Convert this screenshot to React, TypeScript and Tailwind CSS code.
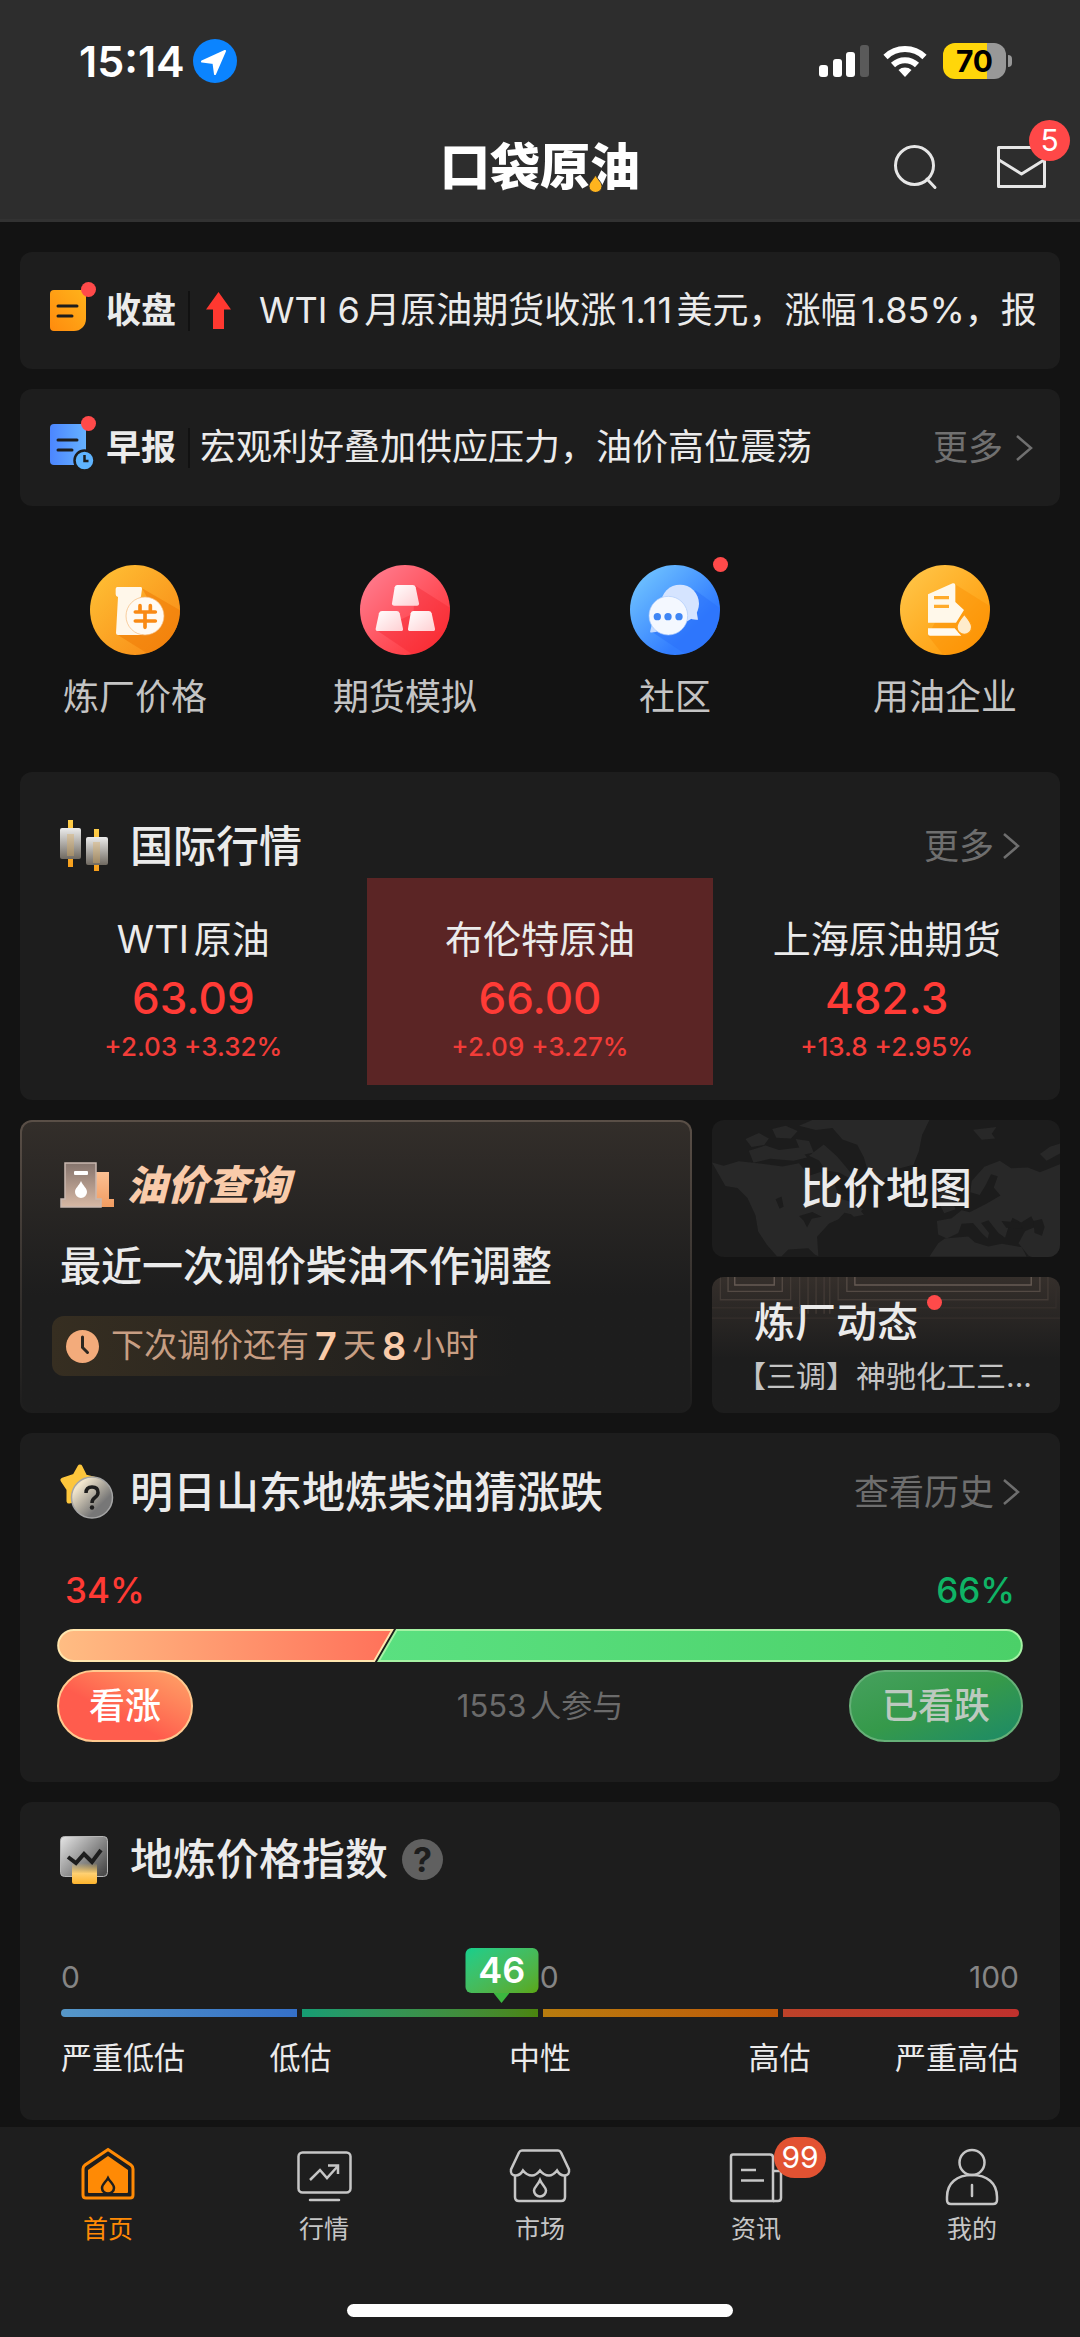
import type { ReactNode } from "react";

const quickLinks = [
  { label: "炼厂价格", icon: <RefineryPriceIcon />, dot: false },
  { label: "期货模拟", icon: <FuturesIcon />, dot: false },
  { label: "社区", icon: <CommunityIcon />, dot: true },
  { label: "用油企业", icon: <CompanyIcon />, dot: false },
];

const quotes = [
  { name: "WTI原油", price: "63.09", change: "+2.03 +3.32%", active: false },
  { name: "布伦特原油", price: "66.00", change: "+2.09 +3.27%", active: true },
  { name: "上海原油期货", price: "482.3", change: "+13.8 +2.95%", active: false },
];

const tabs = [
  { label: "首页", icon: <HomeIcon />, active: true, badge: "" },
  { label: "行情", icon: <ChartIcon />, active: false, badge: "" },
  { label: "市场", icon: <MarketIcon />, active: false, badge: "" },
  { label: "资讯", icon: <NewsIcon />, active: false, badge: "99" },
  { label: "我的", icon: <UserIcon />, active: false, badge: "" },
];

export default function App() {
  return (
    <div className="min-h-screen bg-[#131313] font-['Inter','Noto_Sans_CJK_SC',sans-serif] text-[#ebebeb] [text-autospace:normal]">
      <header className="border-b-[3px] border-[#323232] bg-[#2d2d2d]">
        <StatusBar />
        <div className="grid h-[97px] grid-cols-[1fr_auto_1fr] items-center px-[34px] pb-2">
          <div />
          <Logo />
          <div className="flex items-center justify-end gap-[58px]">
            <button type="button" aria-label="搜索">
              <svg width="46" height="46" viewBox="0 0 46 46" fill="none" stroke="#e6e6e6" strokeWidth="3">
                <circle cx="21.5" cy="21.5" r="19" />
                <path d="M34 35l8 8.500" strokeLinecap="round" />
              </svg>
            </button>
            <button type="button" aria-label="消息" className="relative">
              <svg width="49" height="46" viewBox="0 0 49 46" fill="none" stroke="#e6e6e6" strokeWidth="3" strokeLinejoin="round">
                <rect x="1.500" y="3.500" width="46" height="39" />
                <path d="M2 16l22.500 14L47 16" />
              </svg>
              <span className="absolute -top-6 -right-6 flex size-[41px] items-center justify-center rounded-full bg-[#ff4848] text-[30px] text-white">
                5
              </span>
            </button>
          </div>
        </div>
      </header>

      <main className="flex flex-col gap-5 px-5 pt-[30px] pb-[7px]">
        {/* News rows */}
        <NewsRow label="收盘" icon={<CloseNoteIcon />}>
          <svg width="25" height="37" viewBox="0 0 25 37" className="ml-4 shrink-0" fill="#ff3830">
            <path d="M12.500 0L25 17.500H18V37H7V17.500H0z" />
          </svg>
          <p className="ml-7 flex-1 overflow-hidden whitespace-nowrap">
            WTI 6月原油期货收涨1.11美元，涨幅1.85%，报
          </p>
        </NewsRow>
        <NewsRow label="早报" icon={<MorningNoteIcon />}>
          <p className="ml-2.5 flex-1 overflow-hidden whitespace-nowrap">
            宏观利好叠加供应压力，油价高位震荡
          </p>
          <a href="#" className="flex items-center gap-3 pr-[7px] text-[35px] text-[#707070]">
            更多
            <Chevron />
          </a>
        </NewsRow>

        {/* Quick links */}
        <nav className="-mx-5 grid grid-cols-4 pt-[39px] pb-[29px]">
          {quickLinks.map((item) => (
            <a href="#" key={item.label} className="flex flex-col items-center gap-4">
              <span className="relative">
                {item.icon}
                {item.dot && <Dot className="-top-2 -right-2" />}
              </span>
              <span className="text-[36px] leading-[52px] text-[#c4c4c4]">{item.label}</span>
            </a>
          ))}
        </nav>

        {/* Quotes */}
        <section className="rounded-xl bg-[#1d1d1d] pt-[42px] pb-[15px]">
          <SectionHeader icon={<CandleIcon />} title="国际行情" more="更多" />
          <div className="grid grid-cols-3">
            {quotes.map((q) => (
              <a
                href="#"
                key={q.name}
                className={`flex flex-col items-center pt-9 pb-[23px] ${q.active ? "bg-[#5b2525]" : ""}`}
              >
                <span className="text-[38px] leading-[50px]">{q.name}</span>
                <span className="text-[44px] leading-[68px] font-medium text-[#ff3b36]">{q.price}</span>
                <span className="text-[26px] leading-[30px] font-medium text-[#f23c38]">{q.change}</span>
              </a>
            ))}
          </div>
        </section>

        {/* Oil price / map / refinery */}
        <section className="grid grid-cols-[672fr_348fr] gap-5">
          <OilPriceCard />
          <div className="grid grid-rows-2 gap-5">
            <a href="#" className="relative flex items-center justify-center overflow-hidden rounded-xl bg-[#1c1c1c]">
              <WorldMap />
              <span className="relative text-[43px] leading-none font-medium">比价地图</span>
            </a>
            <a
              href="#"
              className="relative overflow-hidden rounded-xl bg-linear-to-b from-[#352f2b] to-[#1d1d1d] to-60% pt-[18px] pl-6"
            >
              <WallPattern />
              <span className="relative ml-[18px] inline-block text-[41px] leading-[54px] font-medium">
                炼厂动态
                <Dot className="top-0 -right-6" />
              </span>
              <span className="relative block truncate text-[30px] leading-[54px] text-[#c4c4c4]">
                【三调】神驰化工三...
              </span>
            </a>
          </div>
        </section>

        <VoteCard />
        <IndexCard />
      </main>

      <footer className="bg-[#1e1e1e] pt-5 pb-5">
        <nav className="grid grid-cols-5">
          {tabs.map((tab) => (
            <a
              href="#"
              key={tab.label}
              className={`flex flex-col items-center ${tab.active ? "text-[#ff8a05]" : "text-[#c6c6c6]"}`}
            >
              <span className="relative">
                {tab.icon}
                {tab.badge && (
                  <span className="absolute -top-2.5 left-[48px] flex h-[41px] w-[52px] items-center justify-center rounded-full bg-[#e25232] text-[30px] text-white">
                    {tab.badge}
                  </span>
                )}
              </span>
              <span className="text-[25px] leading-[44px]">{tab.label}</span>
            </a>
          ))}
        </nav>
        <div className="mx-auto mt-[53px] h-[13px] w-[386px] rounded-full bg-white" />
      </footer>
    </div>
  );
}

function StatusBar() {
  return (
    <div className="flex h-[122px] items-center justify-between pr-[68px] pl-[79px] text-white">
      <div className="flex items-center gap-2">
        <span className="text-[43px] leading-none font-semibold">15:14</span>
        <svg width="44" height="44" viewBox="0 0 44 44">
          <circle cx="22" cy="22" r="22" fill="#0b84ff" />
          <path d="M32 12L9 22.500l11.500 1.500L22 35z" fill="#fff" stroke="#fff" strokeWidth="2" strokeLinejoin="round" />
        </svg>
      </div>
      <div className="flex items-center">
        <svg width="50" height="33" viewBox="0 0 50 33" fill="#fff">
          <rect x="0" y="20" width="9" height="12" rx="3" />
          <rect x="14" y="14" width="9" height="18" rx="3" />
          <rect x="27" y="7" width="9" height="25" rx="3" />
          <rect x="41" y="0" width="9" height="32" rx="3" fill="#5a5a5a" />
        </svg>
        <svg width="44" height="33" viewBox="0 0 44 33" className="ml-3.5" fill="none" stroke="#fff">
          <path d="M2.500 12a28 28 0 0 1 39 0" strokeWidth="6" />
          <path d="M10 20a17.500 17.500 0 0 1 24 0" strokeWidth="6" />
          <path d="M22 32l-6.500-7a10 10 0 0 1 13 0z" fill="#fff" stroke="none" />
        </svg>
        <span className="ml-4 flex h-9 w-[63px] items-center justify-center rounded-xl bg-linear-to-r from-[#ffd60a] from-70% to-[#989898] to-70% text-[30px] leading-none font-bold text-black">
          70
        </span>
        <span className="ml-0.5 h-3 w-1 rounded-r-full bg-[#989898]" />
      </div>
    </div>
  );
}

function Logo() {
  return (
    <h1 className="relative text-[50px] leading-none font-black text-white">
      口袋原油
      <svg width="13" height="17" viewBox="0 0 13 17" className="absolute right-[38px] bottom-0">
        <path d="M6.500 0C9 5 13 7.500 13 11.500A6 5.500 0 0 1 0 11.500C0 7.500 4 5 6.500 0z" fill="#ffb41e" stroke="#2d2d2d" />
      </svg>
    </h1>
  );
}

function Dot({ className }: { className: string }) {
  return <span className={`absolute size-[15px] rounded-full bg-[#ff4a4a] ${className}`} />;
}

function Chevron() {
  return (
    <svg width="18" height="28" viewBox="0 0 18 28" fill="none" stroke="currentColor" strokeWidth="2.500">
      <path d="M2 2l14 12L2 26" />
    </svg>
  );
}

function NewsRow({ label, icon, children }: { label: string; icon: ReactNode; children: ReactNode }) {
  return (
    <section className="flex items-center rounded-xl bg-[#1d1d1d] px-5 py-8 text-[36px] leading-[53px]">
      <span className="relative ml-2.5 shrink-0">
        {icon}
        <Dot className="-top-2 left-[31px]" />
      </span>
      <h2 className="ml-5 text-[35px] font-bold whitespace-nowrap">{label}</h2>
      <span className="ml-3 h-10 w-0.5 shrink-0 bg-[#111]" />
      {children}
    </section>
  );
}

function SectionHeader({ icon, title, more, hint }: { icon: ReactNode; title: string; more?: string; hint?: boolean }) {
  return (
    <div className="flex h-16 items-center px-10">
      <span className="flex w-[70px] shrink-0">{icon}</span>
      <h2 className="text-[43px] leading-none font-medium">{title}</h2>
      {hint && (
        <button
          type="button"
          aria-label="说明"
          className="ml-3.5 flex size-[41px] items-center justify-center rounded-full bg-[#606060] text-[34px] leading-none font-bold text-[#1d1d1d]"
        >
          ?
        </button>
      )}
      {more && (
        <a href="#" className="ml-auto flex items-center gap-2 text-[35px] leading-none text-[#6e6e6e]">
          {more}
          <Chevron />
        </a>
      )}
    </div>
  );
}

function OilPriceCard() {
  return (
    <a href="#" className="block rounded-xl bg-linear-to-b from-[#5a4f47] to-[#1d1d1d] p-0.5">
      <div className="h-full rounded-[10px] bg-linear-to-b from-[#332e2a] to-[#1d1d1d] to-60% pt-8 pb-[35px] pl-[38px]">
        <div className="flex h-[62px] items-center gap-3">
          <PumpIcon />
          <h2 className="text-[41px] leading-none font-black text-[#f9cbaa] italic">油价查询</h2>
        </div>
        <p className="mt-5 text-[41px] leading-[60px] font-medium whitespace-nowrap">最近一次调价柴油不作调整</p>
        <p className="mt-5 -ml-2 flex h-[60px] w-[464px] items-center rounded-xl bg-linear-to-r from-[#362e21] to-[#1d1d1d] pl-3.5 text-[33px] whitespace-nowrap text-[#c79e83]">
          <svg width="33" height="33" viewBox="0 0 33 33" className="mr-3 shrink-0">
            <circle cx="16.500" cy="16.500" r="16.500" fill="#f3ab7b" />
            <path d="M16.500 7v10.500l5 5" fill="none" stroke="#2c2620" strokeWidth="3" strokeLinecap="round" />
          </svg>
          下次调价还有
          <strong className="mx-1.5 text-[38px] font-semibold text-[#f9cbaa]">7</strong>天
          <strong className="mx-1.5 text-[38px] font-semibold text-[#f9cbaa]">8</strong>小时
        </p>
      </div>
    </a>
  );
}

function VoteCard() {
  return (
    <section className="rounded-xl bg-[#1d1d1d] pt-[27px] pb-10">
      <SectionHeader icon={<GuessIcon />} title="明日山东地炼柴油猜涨跌" more="查看历史" />
      <div className="px-[37px]">
        <div className="mt-11 flex justify-between px-2 text-[35px] leading-[44px] font-medium">
          <span className="text-[#ff3a34]">34%</span>
          <span className="text-[#0fb466]">66%</span>
        </div>
        <svg viewBox="0 0 967 33" className="mt-[17px] w-full">
          <defs>
            <linearGradient id="up">
              <stop stopColor="#ffbd83" />
              <stop offset="1" stopColor="#ff715a" />
            </linearGradient>
            <linearGradient id="down">
              <stop stopColor="#5ae080" />
              <stop offset="1" stopColor="#4bd068" />
            </linearGradient>
          </defs>
          <path d="M16.500 1H335.500L317.500 32H16.500a15.500 15.500 0 0 1 0-31z" fill="url(#up)" stroke="#ffe6ae" strokeWidth="2" />
          <path d="M340 1H950.500a15.500 15.500 0 0 1 0 31H322z" fill="url(#down)" stroke="#a5f3a4" strokeWidth="2" />
        </svg>
        <div className="mt-2 grid grid-cols-3 items-center text-[36px] font-medium">
          <button type="button" className="h-[72px] w-[136px] rounded-full border-2 border-[#ffc98f] bg-linear-to-bl from-[#ffa368] to-[#ff5c4d] to-60% text-white">
            看涨
          </button>
          <span className="text-center text-[31px] font-normal text-[#6b6b6b]">1553人参与</span>
          <button type="button" className="h-[72px] w-[174px] justify-self-end rounded-full border-2 border-[#66b078] bg-linear-to-br from-[#46a15e] via-[#35994a] to-[#1b8a66] text-[#bcc9bf]">
            已看跌
          </button>
        </div>
      </div>
    </section>
  );
}

function IndexCard() {
  return (
    <section className="rounded-xl bg-[#1d1d1d] pt-[26px] pb-10">
      <SectionHeader icon={<IndexIcon />} title="地炼价格指数" hint />
      <div className="px-[41px]">
        <div className="relative mt-[65px] grid grid-cols-3 text-[30px] leading-10 text-[#858585]">
          <span>0</span>
          <span className="text-center">50</span>
          <span className="text-right">100</span>
          <span
            className="absolute -top-[9px] flex h-[45px] w-[73px] -translate-x-1/2 items-center justify-center rounded-md bg-linear-to-br from-[#10cf8c] to-[#5aa70e] text-[36px] font-semibold text-white"
            style={{ left: "46%" }}
          >
            46
            <svg width="16" height="10" viewBox="0 0 16 10" className="absolute top-full" fill="#3cb83f">
              <path d="M0 0h16L8 10z" />
            </svg>
          </span>
        </div>
        <div className="mt-3 grid h-2 grid-cols-4 gap-[5px] overflow-hidden rounded-full">
          <div className="bg-linear-to-r from-[#5697c8] to-[#3570c8]" />
          <div className="bg-linear-to-r from-[#159d73] to-[#4b850c]" />
          <div className="bg-linear-to-r from-[#b87c0e] to-[#bf5809]" />
          <div className="bg-linear-to-r from-[#bd4229] to-[#c0312d]" />
        </div>
        <div className="mt-[19px] grid grid-cols-8 text-[31px] leading-[44px] whitespace-nowrap">
          <span>严重低估</span>
          <span className="col-span-2 text-center">低估</span>
          <span className="col-span-2 text-center">中性</span>
          <span className="col-span-2 text-center">高估</span>
          <span className="flex justify-end">严重高估</span>
        </div>
      </div>
    </section>
  );
}

function WorldMap() {
  return (
    <svg viewBox="40 33 1040 408" preserveAspectRatio="xMidYMid slice" className="absolute inset-0 size-full" fill="#282828">
      <path d="M40 160l35 10 45-14 70 8 60 8 50-10 30 38 36-12 14 42 26-6 16 44 34 10 36 22-22 18-34-8-18 20-28 12-36 40 4 58-10-4-20-20-60 4-20 20h-14l-30-34-26-40-8-48-24-52-30-30-36-6z" />
      <path d="M300 50l40-17h350l-22 44-10 50-16 40-46 12-34 22-24 30-28-30-16-56-20-38-44-16-30-34-50 6z" />
      <path d="M140 90l40-18 30 16-14 20-38 6zM220 60l40-10 36 16-20 22-44-2zM150 125l50-16 40 14 60-8 24 30-40 10-70-6-50 12zM290 90l40 6 14 34-34 8zM330 140l44-34 40 36 42 50 0 18-36-20-40-6-20-30zM820 62l70-8-14 20 10 14-40 4zM1020 135l30-22 30-10v30l-40 22z" />
      <path d="M1080 165l-60 24-36-14-50 2-34-22-46 18-38 42-4 34 28 8 18-30 16-32 20 6-12 34 20 24-42 24-50 26-24-6-30 24-44 8 4 40 26 12 34-16 10-28 34-2 30 34 14 12 4-16-24-30 22-8 30 38 20 14 8-26 14-34 26 14 30-18 16 30-34 14-20 36 30 38 40 14h56z" />
      <path d="M690 441l26-40 20-14 70-6 20 18 40 12 40-8 60 10 14 28zM716 258l22-18 16 26 14 34-34 12-10-20zM440 300l30-14 24 30-30 6z" />
      <path fill="#1c1c1c" d="M1000 335l26-6 8 24-8 26-22-8zM905 335l50 4 14 18-50-2zM300 320l40-12 28 14-30 6-14 26-10-20zM230 270l18-8 6 30-12 6z" />
    </svg>
  );
}

function WallPattern() {
  return (
    <svg viewBox="40 501 1040 408" preserveAspectRatio="xMidYMin slice" className="absolute inset-0 size-full" fill="none" strokeWidth="4">
      <g stroke="#675b54">
        <path d="M108 501v24h118v-24M467 501v24h527v-24" />
      </g>
      <g stroke="#544a44">
        <path d="M88 501v43h162v-43M443 501v43h577v-43" />
      </g>
      <g stroke="#433b36">
        <path d="M65 501v68h210v-68M417 501v68h627v-68M302 501v110M327 501v110M351 501v110M375 501v110M392 501v110" />
      </g>
      <g stroke="#342e2b">
        <path d="M40 593h262M392 593h676v-92M40 624h1040" />
      </g>
    </svg>
  );
}

function CloseNoteIcon() {
  return (
    <svg width="36" height="42" viewBox="0 0 36 42">
      <defs>
        <linearGradient id="note-close" x1="0" y1="1" x2="1" y2="0">
          <stop stopColor="#ff8b0d" />
          <stop offset="1" stopColor="#ffb31b" />
        </linearGradient>
      </defs>
      <path d="M4 0h32v29a12 12 0 0 1-12 12H4a4 4 0 0 1-4-4V4a4 4 0 0 1 4-4z" fill="url(#note-close)" />
      <path d="M8 16h19M8 26h14" stroke="#1d1d1d" strokeWidth="3" strokeLinecap="round" />
    </svg>
  );
}

function MorningNoteIcon() {
  return (
    <svg width="36" height="47" viewBox="0 0 36 47" className="overflow-visible">
      <defs>
        <linearGradient id="note-morning">
          <stop stopColor="#4c86ff" />
          <stop offset="1" stopColor="#66b2ff" />
        </linearGradient>
      </defs>
      <rect width="36" height="41" rx="4" fill="url(#note-morning)" />
      <path d="M8 16h19M8 26h14" stroke="#1d1d1d" strokeWidth="3" strokeLinecap="round" />
      <circle cx="34.500" cy="36.500" r="10" fill="#5fb4ff" stroke="#1d1d1d" strokeWidth="2.500" />
      <path d="M34.500 31v6h4" fill="none" stroke="#1d1d1d" strokeWidth="2.500" />
    </svg>
  );
}

function RefineryPriceIcon() {
  return (
    <svg width="90" height="90" viewBox="0 0 270 270">
      <defs>
        <linearGradient id="refinery" x1="0" y1="0" x2="1" y2="1">
          <stop stopColor="#ffc337" />
          <stop offset="1" stopColor="#f88612" />
        </linearGradient>
        <clipPath id="refinery-clip">
          <circle cx="135" cy="135" r="135" />
        </clipPath>
      </defs>
      <circle cx="135" cy="135" r="135" fill="url(#refinery)" />
      <path d="M156 70l114 66v134H180L80 208l120-60z" fill="#ef7a05" opacity="0.550" clipPath="url(#refinery-clip)" />
      <path d="M82 66h70q5 0 4 6l-3 22q0 5-6 6l8 110H84q-6 0-6-6l6-108q-7-2-7-8V72q0-6 5-6z" fill="#fff7ea" />
      <circle cx="165" cy="153" r="57" fill="#fffaf2" stroke="#f5b774" strokeWidth="2" />
      <path d="M150 122v16M181 122v16M136 141h60M136 168h60M165 141v46" stroke="#f98a14" strokeWidth="11" fill="none" strokeLinecap="round" />
    </svg>
  );
}

function FuturesIcon() {
  return (
    <svg width="90" height="90" viewBox="0 0 270 270">
      <defs>
        <linearGradient id="futures" x1="0" y1="0" x2="1" y2="1">
          <stop offset="0.100" stopColor="#ff7a8c" />
          <stop offset="0.900" stopColor="#ff3338" />
        </linearGradient>
        <linearGradient id="ingot" x1="0" y1="0" x2="1" y2="1">
          <stop stopColor="#fff" />
          <stop offset="1" stopColor="#ffcfd2" />
        </linearGradient>
        <clipPath id="futures-clip">
          <circle cx="135" cy="135" r="135" />
        </clipPath>
      </defs>
      <circle cx="135" cy="135" r="135" fill="url(#futures)" />
      <path d="M166 62l104 66v142H160L50 196l110-50z" fill="#f0202c" opacity="0.350" clipPath="url(#futures-clip)" />
      <g fill="url(#ingot)">
        <path d="M112 60h46q7 0 9 7l10 48q1 7-6 7h-68q-8 0-7-7l8-48q2-7 8-7z" />
        <path d="M66 138h44q7 0 9 7l10 46q1 7-6 7H54q-8 0-7-7l10-46q2-7 9-7z" />
        <path d="M160 138h46q7 0 9 7l10 46q1 7-6 7h-68q-8 0-7-7l8-46q2-7 8-7z" />
      </g>
    </svg>
  );
}

function CommunityIcon() {
  return (
    <svg width="90" height="90" viewBox="0 0 270 270">
      <defs>
        <linearGradient id="community" x1="0" y1="0" x2="1" y2="1">
          <stop offset="0.100" stopColor="#6fc2ff" />
          <stop offset="0.700" stopColor="#327dff" />
        </linearGradient>
        <clipPath id="community-clip">
          <circle cx="135" cy="135" r="135" />
        </clipPath>
      </defs>
      <circle cx="135" cy="135" r="135" fill="url(#community)" />
      <path d="M196 76l74 54v140H170L62 198z" fill="#2a70fa" opacity="0.500" clipPath="url(#community-clip)" />
      <circle cx="150" cy="116" r="57" fill="#d5e4ff" />
      <path d="M200 140l4 24q-14 2-28-6z" fill="#d5e4ff" />
      <path d="M66 176l-6 26q14 2 34-8z" fill="#c4dbff" />
      <circle cx="115" cy="152" r="58" fill="#f4f8ff" stroke="#a9c8fb" strokeWidth="2" />
      <g fill="#3f86f5">
        <circle cx="82" cy="155" r="11" />
        <circle cx="114" cy="155" r="11" />
        <circle cx="147" cy="155" r="11" />
      </g>
    </svg>
  );
}

function CompanyIcon() {
  return (
    <svg width="90" height="90" viewBox="0 0 270 270">
      <defs>
        <linearGradient id="company" x1="0" y1="0" x2="1" y2="1">
          <stop stopColor="#ffc94d" />
          <stop offset="1" stopColor="#ff9400" />
        </linearGradient>
        <clipPath id="company-clip">
          <circle cx="135" cy="135" r="135" />
        </clipPath>
      </defs>
      <circle cx="135" cy="135" r="135" fill="url(#company)" />
      <path d="M165 58l105 66v146H130L84 212z" fill="#fb8c00" opacity="0.400" clipPath="url(#company-clip)" />
      <path d="M84 88l74-33q8-2 8 6v50l26 24-24 38H84z" fill="#fff8ea" />
      <path d="M102 98h45M102 124h45" stroke="#ffab2b" strokeWidth="10" />
      <path d="M84 190h80l20 22H90q-6 0-6-6z" fill="#fffaf0" />
      <path d="M193 148q22 26 22 38a22 22 0 0 1-44 0q0-12 22-38z" fill="#ffeccb" stroke="#ff9c12" strokeWidth="4" />
    </svg>
  );
}

function CandleIcon() {
  return (
    <svg width="48" height="52" viewBox="0 0 48 52">
      <defs>
        <linearGradient id="candle" x1="0" y1="0" x2="0" y2="1">
          <stop stopColor="#ececec" />
          <stop offset="1" stopColor="#6f6960" />
        </linearGradient>
        <linearGradient id="wick" x1="0" y1="0" x2="0" y2="1">
          <stop stopColor="#ffcf4a" />
          <stop offset="1" stopColor="#f79e1b" />
        </linearGradient>
      </defs>
      <rect x="8" y="0" width="5" height="47" fill="url(#wick)" />
      <rect x="34" y="9" width="5" height="42" fill="url(#wick)" />
      <rect x="0" y="8" width="21" height="31" rx="2" fill="url(#candle)" />
      <rect x="26" y="17" width="22" height="28" rx="2" fill="url(#candle)" />
      <rect x="7" y="14" width="7" height="22" fill="#d9ac62" opacity="0.400" />
      <rect x="33" y="22" width="7" height="21" fill="#d9ac62" opacity="0.400" />
    </svg>
  );
}

function PumpIcon() {
  return (
    <svg width="54" height="46" viewBox="0 0 54 46">
      <defs>
        <linearGradient id="pump" x1="0" y1="0" x2="0" y2="1">
          <stop stopColor="#85746d" />
          <stop offset="1" stopColor="#d7b8a4" />
        </linearGradient>
        <linearGradient id="pump-side" x1="0" y1="0" x2="0" y2="1">
          <stop stopColor="#fbc093" />
          <stop offset="1" stopColor="#f19c61" />
        </linearGradient>
      </defs>
      <path d="M34 10h15v27h5v8H30z" fill="url(#pump-side)" />
      <path d="M5 1h31v36h5v8H1v-8h4z" fill="url(#pump)" stroke="#c9b8b0" strokeWidth="1.500" />
      <rect x="14" y="9" width="14" height="4" rx="1" fill="#fff" />
      <path d="M21 19c2 5 6 7 6 11a6 6 0 0 1-12 0c0-4 4-6 6-11z" fill="#fff" />
    </svg>
  );
}

function GuessIcon() {
  return (
    <svg width="54" height="56" viewBox="0 0 54 56">
      <defs>
        <linearGradient id="coin" x1="0" y1="0" x2="1" y2="1">
          <stop offset="0.200" stopColor="#f2e6cd" />
          <stop offset="0.700" stopColor="#777" />
        </linearGradient>
      </defs>
      <path
        d="M20 3l5 10 12 3-8 10 1 12-11-4-10 3 0-12-6-9 12-4z"
        fill="#fdc63c"
        stroke="#fdc63c"
        strokeWidth="5"
        strokeLinejoin="round"
      />
      <circle cx="32" cy="33.500" r="20.500" fill="url(#coin)" stroke="#a5a5a5" strokeWidth="1.500" />
      <path d="M26 29q0-6 6-6t6 5.500q0 3-3 5t-3 5.500" fill="none" stroke="#1d1d1d" strokeWidth="3.500" />
      <circle cx="32" cy="43.500" r="2.200" fill="#1d1d1d" />
    </svg>
  );
}

function IndexIcon() {
  return (
    <svg width="48" height="50" viewBox="0 0 48 50">
      <defs>
        <linearGradient id="panel" x1="0" y1="0" x2="1" y2="0.800">
          <stop stopColor="#e6e6e6" />
          <stop offset="1" stopColor="#4c4c4c" />
        </linearGradient>
        <linearGradient id="foot" x1="0" y1="0" x2="0" y2="1">
          <stop stopColor="#ffcf5c" stopOpacity="0" />
          <stop offset="0.500" stopColor="#ffd071" />
          <stop offset="1" stopColor="#fdb42d" />
        </linearGradient>
      </defs>
      <rect x="0.500" y="1.500" width="47" height="40" rx="4" fill="url(#panel)" stroke="#b5b5b5" />
      <rect x="12" y="28" width="25" height="21" rx="2" fill="url(#foot)" />
      <path d="M8 22l8 6 8-9 8 8 9-12" fill="none" stroke="#1d1d1d" strokeWidth="4" />
    </svg>
  );
}

function HomeIcon() {
  return (
    <svg width="60" height="60" viewBox="0 0 60 60" fill="none">
      <path d="M30 2.500L53 18q2 1.500 2 4v26q0 3-3 3H8q-3 0-3-3V22q0-2.500 2-4z" stroke="currentColor" strokeWidth="3" />
      <path d="M30 9l20 14v22q0 1-1 1H11q-1 0-1-1V23z" fill="currentColor" />
      <path d="M30 31c2 4 6 6 6 10a6 5.500 0 0 1-12 0c0-4 4-6 6-10z" stroke="#1e1e1e" strokeWidth="2.500" />
    </svg>
  );
}

function ChartIcon() {
  return (
    <svg width="60" height="60" viewBox="0 0 60 60" fill="none" stroke="currentColor" strokeWidth="2.500">
      <rect x="4.500" y="5.500" width="52" height="40" rx="4" />
      <path d="M16 53h29" strokeLinecap="round" />
      <path d="M16 33l10-10 7 8 10-11M34 18.500h10V27" />
    </svg>
  );
}

function MarketIcon() {
  return (
    <svg width="62" height="60" viewBox="0 0 62 60" fill="none" stroke="currentColor" strokeWidth="2.500">
      <path d="M13 3.500h36q2 0 3 2l8 17q1 6-5 6-4 0-7-5-4 5-8 5-5 0-9-5-4 5-8 5-5 0-9-5-3 5-7 5-6 0-5-6l8-17q1-2 3-2z" />
      <path d="M6 28v22q0 4 4 4h42q4 0 4-4V28" />
      <path d="M31 33c2 5 6 7 6 10.500a6 6 0 0 1-12 0c0-3.500 4-5.500 6-10.500z" />
    </svg>
  );
}

function NewsIcon() {
  return (
    <svg width="60" height="60" viewBox="0 0 60 60" fill="none" stroke="currentColor" strokeWidth="2.500">
      <path d="M7 7.500h37q3 0 3 3V54H7q-2 0-2-2V9.500q0-2 2-2z" />
      <path d="M47 24h8v27q0 3-3 3h-5" />
      <path d="M15 23h15M15 33.500h23" />
    </svg>
  );
}

function UserIcon() {
  return (
    <svg width="60" height="60" viewBox="0 0 60 60" fill="none" stroke="currentColor" strokeWidth="2.500">
      <circle cx="30" cy="15.500" r="12.500" />
      <path d="M30 28c15 0 25 8 25 22v3q0 4-4 4H9q-4 0-4-4v-3c0-14 10-22 25-22z" />
      <path d="M30 38v11" strokeLinecap="round" />
    </svg>
  );
}
